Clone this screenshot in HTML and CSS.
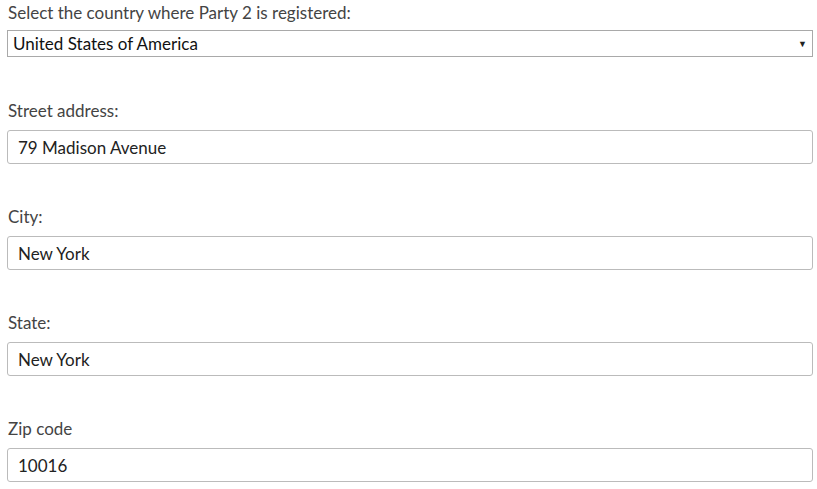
FILE: index.html
```html
<!DOCTYPE html>
<html>
<head>
<meta charset="utf-8">
<link rel="stylesheet" href="styles.css">
</head>
<body>
<form class="form">
  <div class="field">
    <label class="label">Select the country where Party 2 is registered:</label>
    <div class="select">
      <span class="select-value">United States of America</span>
      <span class="select-arrow">▼</span>
    </div>
  </div>
  <div class="field">
    <label class="label">Street address:</label>
    <div class="input">79 Madison Avenue</div>
  </div>
  <div class="field">
    <label class="label">City:</label>
    <div class="input">New York</div>
  </div>
  <div class="field">
    <label class="label">State:</label>
    <div class="input">New York</div>
  </div>
  <div class="field">
    <label class="label">Zip code</label>
    <div class="input">10016</div>
  </div>
</form>
</body>
</html>
```
FILE: styles.css
```css
html, body {
  margin: 0;
  padding: 0;
  background: #fff;
}
body {
  font-family: "Lato", "Open Sans", sans-serif;
  font-size: 17px;
  color: #333;
}
.form {
  display: flex;
  flex-direction: column;
  gap: 40px;
  width: 806px;
  padding-left: 7px;
}
.field {
  display: flex;
  flex-direction: column;
}
.field:nth-child(2) {
  margin-top: 1px;
}
.label {
  display: block;
  line-height: 22px;
  padding-top: 2px;
  padding-left: 1px;
  margin-bottom: 8px;
  color: #444;
}
.field:first-child .label {
  margin-bottom: 6px;
}
.select {
  box-sizing: border-box;
  height: 27px;
  border: 1px solid #a9a9a9;
  display: flex;
  align-items: center;
  justify-content: space-between;
  padding: 0 5px 0 5px;
  color: #111;
}
.select-arrow {
  font-size: 9px;
  color: #222;
}
.input {
  box-sizing: border-box;
  height: 34px;
  border: 1px solid #bbb;
  border-radius: 3px;
  display: flex;
  align-items: center;
  padding: 0 10px;
  color: #222;
}
```
